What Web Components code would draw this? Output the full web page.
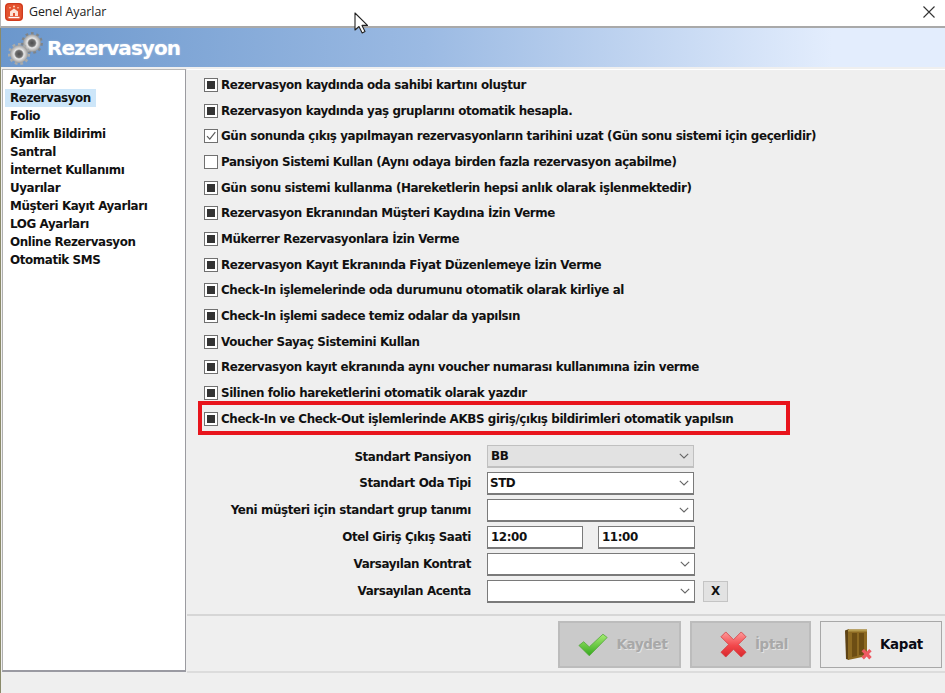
<!DOCTYPE html>
<html lang="tr"><head><meta charset="utf-8"><title>Genel Ayarlar</title>
<style>
html,body{margin:0;padding:0;width:945px;height:693px;overflow:hidden;background:#efefef}
body{font-family:"DejaVu Sans","Liberation Sans",sans-serif;color:#111}
</style></head><body>
<settings-window>
  <title-bar slot="title" text="Genel Ayarlar"></title-bar>
  <banner-head slot="banner" text="Rezervasyon"></banner-head>
  <side-list slot="side" selected="Rezervasyon" items="Ayarlar|Rezervasyon|Folio|Kimlik Bildirimi|Santral|İnternet Kullanımı|Uyarılar|Müşteri Kayıt Ayarları|LOG Ayarları|Online Rezervasyon|Otomatik SMS"></side-list>
  <check-row state="mixed">Rezervasyon kaydında oda sahibi kartını oluştur</check-row>
  <check-row state="mixed">Rezervasyon kaydında yaş gruplarını otomatik hesapla.</check-row>
  <check-row state="checked">Gün sonunda çıkış yapılmayan rezervasyonların tarihini uzat (Gün sonu sistemi için geçerlidir)</check-row>
  <check-row state="off">Pansiyon Sistemi Kullan (Aynı odaya birden fazla rezervasyon açabilme)</check-row>
  <check-row state="mixed">Gün sonu sistemi kullanma (Hareketlerin hepsi anlık olarak işlenmektedir)</check-row>
  <check-row state="mixed">Rezervasyon Ekranından Müşteri Kaydına İzin Verme</check-row>
  <check-row state="mixed">Mükerrer Rezervasyonlara İzin Verme</check-row>
  <check-row state="mixed">Rezervasyon Kayıt Ekranında Fiyat Düzenlemeye İzin Verme</check-row>
  <check-row state="mixed">Check-In işlemelerinde oda durumunu otomatik olarak kirliye al</check-row>
  <check-row state="mixed">Check-In işlemi sadece temiz odalar da yapılsın</check-row>
  <check-row state="mixed">Voucher Sayaç Sistemini Kullan</check-row>
  <check-row state="mixed">Rezervasyon kayıt ekranında aynı voucher numarası kullanımına izin verme</check-row>
  <check-row state="mixed">Silinen folio hareketlerini otomatik olarak yazdır</check-row>
  <check-row state="mixed" marked>Check-In ve Check-Out işlemlerinde AKBS giriş/çıkış bildirimleri otomatik yapılsın</check-row>

  <form-row slot="form" label="Standart Pansiyon"><select-box value="BB" disabled></select-box></form-row>
  <form-row slot="form" label="Standart Oda Tipi"><select-box value="STD"></select-box></form-row>
  <form-row slot="form" label="Yeni müşteri için standart grup tanımı"><select-box></select-box></form-row>
  <form-row slot="form" label="Otel Giriş Çıkış Saati"><text-box value="12:00"></text-box><text-box value="11:00" style="margin-left:15px;width:97px"></text-box></form-row>
  <form-row slot="form" label="Varsayılan Kontrat"><select-box wide></select-box></form-row>
  <form-row slot="form" label="Varsayılan Acenta"><select-box wide></select-box><small-btn>X</small-btn></form-row>

  <action-btn slot="actions" icon="check" disabled style="width:123px">Kaydet</action-btn>
  <action-btn slot="actions" icon="cross" disabled style="width:121px;margin-left:9px">İptal</action-btn>
  <action-btn slot="actions" icon="door" style="width:122px;margin-left:9px">Kapat</action-btn>
</settings-window>
<script>
const def=(name,css,html)=>customElements.define(name,class extends HTMLElement{
  constructor(){super();this.attachShadow({mode:'open'});}
  connectedCallback(){const a=n=>this.getAttribute(n);this.shadowRoot.innerHTML='<style>'+css+'</style>'+html(a,this);}
});
const FONT='font:700 11.9px "DejaVu Sans",sans-serif;letter-spacing:-.4px;color:#111;';

def('settings-window',`
:host{display:flex;flex-direction:column;width:945px;height:693px;background:#efefef;position:relative}
.main{flex:1;display:flex;min-height:0;padding-top:2px}
.side{width:187px;flex:none;display:flex;padding-left:2px;box-sizing:border-box}
.right{flex:1;display:flex;flex-direction:column;min-width:0}
.content{height:547px;box-sizing:border-box;padding:2px 0 0 17px;border-bottom:2px solid #d6d6d6;border-top:1px solid #fff;position:relative}
.checks{display:flex;flex-direction:column}
.form{display:flex;flex-direction:column;gap:3px;margin-top:13px}
.footer{height:57px;flex:none;box-sizing:border-box;display:flex;justify-content:flex-end;align-items:flex-start;padding:5px 3px 0 0;border-bottom:2px solid #dcdcdc}
.left-edge{position:absolute;left:0;top:28px;bottom:0;width:1px;background:#8a8a6a}
.cursor{position:absolute;left:354px;top:12px;width:15px;height:22px}
`,()=>`
<slot name="title"></slot><slot name="banner"></slot>
<div class="main">
  <div class="side"><slot name="side"></slot></div>
  <div class="right">
    <div class="content">
      <div class="checks"><slot></slot></div>
      <div class="form"><slot name="form"></slot></div>
    </div>
    <div class="footer"><slot name="actions"></slot></div>
  </div>
</div>
<div class="left-edge"></div>
<svg class="cursor" viewBox="0 0 15 22"><path d="M1 1 V18 L5 14.500 L8.200 21 L11 19.600 L8 13.400 H13.500 Z" fill="#fff" stroke="#222" stroke-width="1.100" stroke-linejoin="round"/></svg>
`);

def('title-bar',`
:host{display:flex;align-items:center;height:26px;box-sizing:content-box;flex:none;background:#fff;border-bottom:2px solid #a9a9a9;border-left:1px solid #b8b8b8;padding-left:4px;color:#222;position:relative}
.inner{display:flex;align-items:center;margin-top:-3px}
svg.app{width:18px;height:18px;margin-right:6px}
span{font:400 12.4px "Open Sans","Liberation Sans",sans-serif;letter-spacing:-.05px}
svg.x{position:absolute;right:9px;top:5px;width:14px;height:14px}
`,a=>`
<div class="inner"><svg class="app" viewBox="0 0 18 18"><rect width="18" height="18" rx="4" fill="#e4532f"/><rect x=".7" y=".7" width="16.600" height="16.600" rx="3.500" fill="none" stroke="#c9361c"/><path d="M5 13V8.500L9 5.500l4 3V13z" fill="#fde3d5"/><path d="M3.500 14.500h11" stroke="#fff" stroke-width="1.400"/><circle cx="9" cy="3.600" r="1" fill="#ffd9c4"/><circle cx="5" cy="4.800" r=".8" fill="#ffd9c4"/><circle cx="13" cy="4.800" r=".8" fill="#ffd9c4"/><path d="M8 13v-3h2v3" fill="#e4532f"/></svg>
<span>${a('text')}</span></div>
<svg class="x" viewBox="0 0 14 14"><path d="M1.500 1.500l11 11M12.500 1.500l-11 11" stroke="#333" stroke-width="1.100" fill="none"/></svg>`);

def('banner-head',`
:host{display:flex;align-items:center;height:39px;flex:none;background:linear-gradient(90deg,#6b97cc 0%,#9bbae3 45%,#e3edfd 88%,#e3edfd 100%);padding-left:7px;color:#fff;border-left:1px solid #8a8a8a;box-sizing:border-box}
svg{width:35px;height:36px;flex:none;margin-right:4px}
span{font:700 20px "DejaVu Sans",sans-serif;letter-spacing:-.95px;text-shadow:0 0 2px rgba(255,255,255,.4);margin-top:1px}
`,a=>`
<svg viewBox="0 0 35 36">
<defs><radialGradient id="g"><stop offset="0" stop-color="#4e4e4e"/><stop offset=".38" stop-color="#6e6e6e"/><stop offset=".55" stop-color="#e8e8e8"/><stop offset="1" stop-color="#9a9a9a"/></radialGradient></defs>
<g transform="translate(24 13)"><circle r="9" fill="none" stroke="#7f8488" stroke-width="3.800" stroke-dasharray="2.550 2.590"/><circle r="8.800" fill="url(#g)"/></g>
<g transform="translate(11 24)"><circle r="9.200" fill="none" stroke="#a9abab" stroke-width="3.800" stroke-dasharray="2.600 2.660"/><circle r="9" fill="url(#g)"/></g>
</svg><span>${a('text')}</span>`);

def('side-list',`
:host{display:block;width:184px;box-sizing:border-box;background:#fff;border-style:solid;border-width:1px 1px 2px 1px;border-color:#b8b8b8 #9b9ba0 #9a9aa2 #b0b0b0;padding:1px 0 0 2px;${FONT}height:603px;align-self:flex-start}
div{height:18px;line-height:18px;padding-left:5px}
.sel{background:#cde6f9;width:91px;box-sizing:border-box}
`,a=>a('items').split('|').map(t=>`<div class="${t===a('selected')?'sel':''}">${t}</div>`).join(''));

def('check-row',`
:host{display:flex;align-items:center;height:25.7px;position:relative;${FONT}white-space:nowrap}
.box{width:14px;height:14px;box-sizing:border-box;border:1px solid #707070;background:#fff;margin-right:3px;flex:none;display:flex;align-items:center;justify-content:center}
.box i{display:block;width:8px;height:8px;background:#333}
.box svg{width:12px;height:12px}
.mark{position:absolute;left:-6px;top:-5px;width:592px;height:34px;box-sizing:border-box;border:4px solid #e8141c;pointer-events:none}
`,(a,el)=>{const s=a('state');
 const inner=s==='mixed'?'<i></i>':s==='checked'?'<svg viewBox="0 0 12 12"><path d="M2 6.200l2.800 3L10.300 2.200" fill="none" stroke="#5a5a5a" stroke-width="1.200"/></svg>':'';
 return `<div class="box">${inner}</div><span><slot></slot></span>${el.hasAttribute('marked')?'<div class="mark"></div>':''}`});

def('form-row',`
:host{display:flex;align-items:center;height:23.9px;${FONT}}
label{width:267px;flex:none;text-align:right;white-space:nowrap}
.f{display:flex;align-items:center;margin-left:16px}
`,a=>`<label>${a('label')}</label><div class="f"><slot></slot></div>`);

def('select-box',`
:host{display:flex;align-items:center;justify-content:space-between;width:207px;height:23px;box-sizing:border-box;border:1px solid #7a7a7a;border-width:1px 1px 2px 1px;background:#fff;padding:0 4px 0 2px;${FONT}}
:host([disabled]){background:#e2e2e2;border-color:#c0c0c0;padding-left:3px}
:host([wide]){width:208px}
svg{width:10px;height:6px;flex:none}
`,a=>`<span>${a('value')||''}</span><svg viewBox="0 0 10 6"><path d="M.8.8L5 5l4.200-4.200" fill="none" stroke="#666" stroke-width="1.100"/></svg>`);

def('text-box',`
:host{display:flex;align-items:center;width:96px;height:23px;box-sizing:border-box;border:1px solid #7a7a7a;border-width:1px 1px 2px 1px;background:#fff;padding-left:3px;${FONT}}
`,a=>`<span>${a('value')}</span>`);

def('small-btn',`
:host{display:flex;align-items:center;justify-content:center;width:25px;height:21px;box-sizing:border-box;margin-left:8px;border:1px solid #c4c4c4;background:#e2e2e2;font:700 11.9px "DejaVu Sans",sans-serif;color:#111}
`,()=>`<slot></slot>`);

const ICONS={
check:`<svg width="32" height="26" viewBox="0 0 34 26"><defs><linearGradient id="c" x1="0" y1="0" x2="0" y2="1"><stop offset="0" stop-color="#a6ec72"/><stop offset="1" stop-color="#35a81e"/></linearGradient></defs><path d="M1 13.500l5-4 6 5.500L26.500 1.500l4.500 3.500L12 24.500z" fill="url(#c)" stroke="#4fa536" stroke-width=".8" stroke-linejoin="round"/></svg>`,
cross:`<svg width="29" height="29" viewBox="0 0 30 30"><defs><linearGradient id="r" x1="0" y1="0" x2="0" y2="1"><stop offset="0" stop-color="#ff9a9a"/><stop offset=".55" stop-color="#f2474b"/><stop offset="1" stop-color="#d8272c"/></linearGradient></defs><path d="M2 7l5-5 8 8 8-8 5 5-8 8 8 8-5 5-8-8-8 8-5-5 8-8z" fill="url(#r)" stroke="#d33a3e" stroke-width=".8" stroke-linejoin="round"/></svg>`,
door:`<svg width="28" height="34" viewBox="0 0 28 34"><path d="M0 2.500L4 1V32l-3-1z" fill="#5e4315"/><path d="M3 1.500H22V28L3 32z" fill="#8d6a22"/><path d="M3 1.500H22v2H3z" fill="#b59a4c"/><path d="M7 5h5v23l-5 1zM14 5h5v22h-5z" fill="#6d4e14"/><path d="M19 21l2.700 2.800 2.500-2.800 2.500 2.300-2.700 2.700 2.700 3-2.500 2.400-2.500-2.900-2.800 2.900-2.400-2.400 2.800-3-2.800-2.700z" fill="#ee5a62"/></svg>`};

def('action-btn',`
:host{display:flex;align-items:center;justify-content:center;height:47px;box-sizing:border-box;border:1px solid #a8a8a8;background:#ececec;padding-left:6px;font:700 13.400px "DejaVu Sans",sans-serif;letter-spacing:-.3px;color:#0a0a14;flex:none}
:host([disabled]){background:#cacaca;border:2px solid #bcbcbc;color:#a8a8a8;text-shadow:1px 1px 0 #e2e2e2}
svg{flex:none;margin-right:7px}
`,a=>`${ICONS[a('icon')]}<span><slot></slot></span>`);
</script>
</body></html>
